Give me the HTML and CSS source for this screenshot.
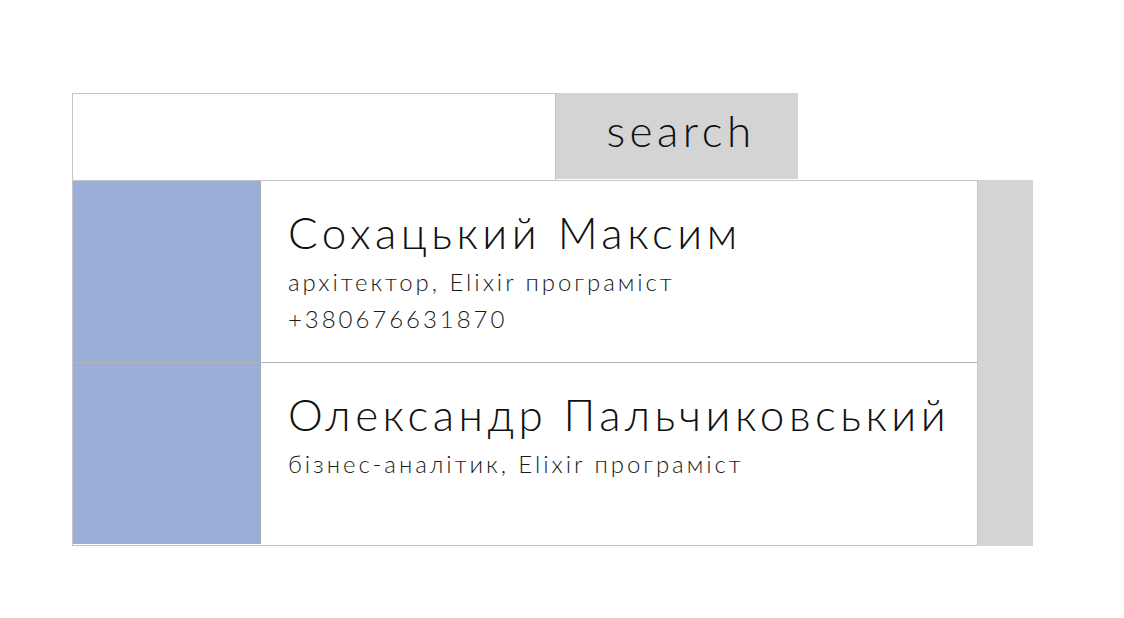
FILE: index.html
```html
<!DOCTYPE html>
<html lang="uk">
<head>
<meta charset="utf-8">
<title>Пошук</title>
<link rel="stylesheet" href="styles.css">
</head>
<body>
<div class="app">
  <form class="search-row">
    <input class="search-input" type="text">
    <button class="search-btn" type="button">search</button>
  </form>
  <div class="results">
    <ul class="list">
      <li class="item">
        <div class="avatar"></div>
        <div class="info">
          <div class="name">Сохацький Максим</div>
          <div class="role">архітектор, Elixir програміст</div>
          <div class="role">+380676631870</div>
        </div>
      </li>
      <li class="item">
        <div class="avatar"></div>
        <div class="info">
          <div class="name">Олександр Пальчиковський</div>
          <div class="role">бізнес-аналітик, Elixir програміст</div>
        </div>
      </li>
    </ul>
    <div class="scrollbar"></div>
  </div>
</div>
</body>
</html>
```
FILE: styles.css
```css
html, body {
  margin: 0;
  padding: 0;
  background: #fff;
}
body {
  font-family: Lato, "Open Sans", "Noto Sans", sans-serif;
  font-weight: 300;
  color: #111;
}
.app {
  padding: 93px 0 0 72px;
}
.search-row {
  display: flex;
  margin: 0;
  height: 87px;
}
.search-input {
  box-sizing: border-box;
  width: 484px;
  height: 87px;
  margin: 0;
  border: 1px solid #c4c4c4;
  border-bottom: none;
  outline: none;
  padding: 0 20px;
  font: inherit;
  font-size: 40px;
}
.search-btn {
  box-sizing: border-box;
  width: 242px;
  height: 86px;
  margin: 0;
  border: none;
  background: #d4d4d4;
  font-family: inherit;
  font-weight: 300;
  font-size: 44px;
  letter-spacing: 4.5px;
  color: #111;
  padding: 0 0 12px 8px;
}
.results {
  display: flex;
}
.list {
  box-sizing: border-box;
  width: 906px;
  height: 366px;
  margin: 0;
  padding: 0;
  list-style: none;
  border: 1px solid #c4c4c4;
}
.item {
  display: flex;
  height: 181px;
  border-bottom: 1px solid #b4b4b4;
}
.item:last-child {
  border-bottom: none;
}
.avatar {
  width: 187px;
  flex: none;
  background: #9aafd8;
  border-right: 1px solid #a4a8b0;
}
.info {
  padding: 23px 0 0 27px;
}
.name {
  font-size: 44px;
  line-height: 56px;
  letter-spacing: 4.5px;
  margin-bottom: 3px;
  white-space: nowrap;
}
.role {
  font-size: 24px;
  line-height: 37px;
  color: #1a1a1a;
  letter-spacing: 2.95px;
  white-space: nowrap;
}
.scrollbar {
  width: 55px;
  height: 366px;
  background: #d4d4d4;
}
```
